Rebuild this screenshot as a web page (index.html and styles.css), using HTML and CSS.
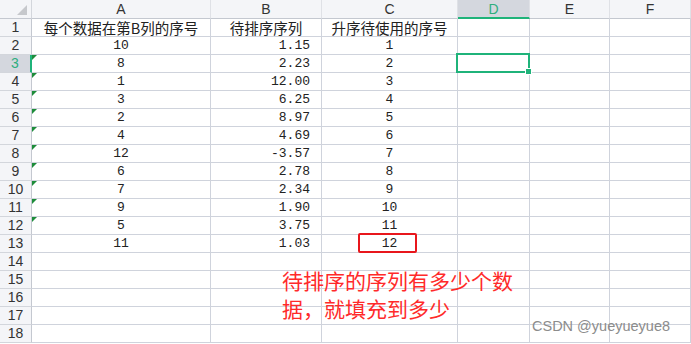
FILE: index.html
```html
<!DOCTYPE html>
<html lang="zh-CN">
<head>
    <meta charset="UTF-8">
    <title>排序序号</title>
    <link rel="stylesheet" href="styles.css">
</head>
<body>
    <div class="planilha">
        <div class="grade" id="grade"></div>
        <div class="nota">待排序的序列有多少个数<br>据，就填充到多少</div>
        <div class="marca">CSDN @yueyueyue8</div>
    </div>
    <script>
        let colunas = ["A", "B", "C", "D", "E", "F"];
        let colA = [10, 8, 1, 3, 2, 4, 12, 6, 7, 9, 5, 11];
        let colB = ["1.15", "2.23", "12.00", "6.25", "8.97", "4.69", "-3.57", "2.78", "2.34", "1.90", "3.75", "1.03"];

        function montarGrade() {
            let grade = document.getElementById("grade");
            let html = `<div class="canto"><svg width="32" height="19"><polygon points="27,5 27,15 17,15" fill="#c6c8cc"/></svg></div>`;
            colunas.forEach(c => {
                html += `<div class="cab-col${c === "D" ? " ativo" : ""}">${c}</div>`;
            });
            for (let linha = 1; linha <= 18; linha++) {
                html += `<div class="cab-lin${linha === 3 ? " ativo" : ""}">${linha}</div>`;
                let a = "", b = "", c = "";
                if (linha === 1) {
                    a = "每个数据在第B列的序号";
                    b = "待排序序列";
                    c = "升序待使用的序号";
                } else if (linha <= 13) {
                    a = colA[linha - 2];
                    b = colB[linha - 2];
                    c = linha - 1;
                }
                let texto = linha === 1 ? " texto" : " num";
                let marca = linha >= 3 && linha <= 12 ? " triangulo" : "";
                html += `<div class="cel centro${texto}${marca}">${a}</div>`;
                html += `<div class="cel${linha === 1 ? " centro texto" : " direita num"}">${b}</div>`;
                html += `<div class="cel centro${texto}${linha === 13 ? " destaque" : ""}">${c}</div>`;
                html += `<div class="cel${linha === 3 ? " selecionada" : ""}"></div>`;
                html += `<div class="cel"></div>`;
                html += `<div class="cel"></div>`;
            }
            grade.innerHTML = html;
        }
        montarGrade();
    </script>
</body>
</html>
```

FILE: styles.css
```css
body {
    margin: 0;
    background: white;
    color: #222;
    font-family: 'Noto Sans CJK SC', sans-serif;
}
.planilha {
    position: relative;
    width: 691px;
    height: 344px;
    overflow: hidden;
}
.grade {
    display: grid;
    grid-template-columns: 32px 179px 111px 136px 72px 80px 81px;
    grid-template-rows: 19px repeat(18, 18px);
}
.grade > div {
    box-sizing: border-box;
    position: relative;
}
.canto {
    background: #f4f5f8;
    border-right: 1px solid #d3d6dc;
    border-bottom: 1px solid #c4c8d0;
}
.canto svg {
    display: block;
}
.cab-col {
    background: #f4f5f8;
    border-right: 1px solid #dfe1e6;
    border-bottom: 1px solid #c4c8d0;
    font-family: 'Liberation Sans', sans-serif;
    font-size: 14px;
    line-height: 18px;
    text-align: center;
    color: #333;
}
.cab-col.ativo {
    background: #d4d7de;
    border-bottom: 2px solid #1fb37a;
    color: #2fae7e;
}
.cab-lin {
    background: #f4f5f8;
    border-right: 1px solid #c4c8d0;
    border-bottom: 1px solid #d3d6dc;
    font-family: 'Liberation Sans', sans-serif;
    font-size: 14px;
    line-height: 17px;
    text-align: center;
    color: #333;
}
.cab-lin.ativo {
    background: #d4d7de;
    border-right: 2px solid #1fb37a;
    color: #2fae7e;
}
.cel {
    border-right: 1px solid #cfd3dc;
    border-bottom: 1px solid #cfd3dc;
    line-height: 17px;
    white-space: nowrap;
}
.centro {
    text-align: center;
}
.direita {
    text-align: right;
    padding-right: 11px;
}
.texto {
    font-size: 14.5px;
    font-family: 'Noto Sans CJK SC', sans-serif;
}
.num {
    font-family: 'Liberation Mono', monospace;
    font-size: 13px;
}
.triangulo::before {
    content: "";
    position: absolute;
    top: 0;
    left: 0;
    border-top: 5px solid #1d8c3a;
    border-right: 5px solid transparent;
}
.selecionada::after {
    content: "";
    position: absolute;
    top: -2px;
    left: -2px;
    right: -1px;
    bottom: -1px;
    border: 2px solid #1fb37a;
}
.selecionada::before {
    content: "";
    position: absolute;
    right: -3px;
    bottom: -3px;
    width: 5px;
    height: 5px;
    background: #1fb37a;
    border: 1px solid white;
    z-index: 2;
}
.destaque::after {
    content: "";
    position: absolute;
    top: -2px;
    left: 36px;
    width: 59px;
    height: 20px;
    box-sizing: border-box;
    border: 2px solid #e8161c;
    border-radius: 2px;
}
.nota {
    position: absolute;
    left: 282px;
    top: 266px;
    font-size: 21px;
    line-height: 28px;
    color: #ff2a2a;
}
.marca {
    position: absolute;
    left: 532px;
    top: 318px;
    font-family: 'Liberation Sans', sans-serif;
    font-size: 14.5px;
    color: #8c8c8c;
}
```
